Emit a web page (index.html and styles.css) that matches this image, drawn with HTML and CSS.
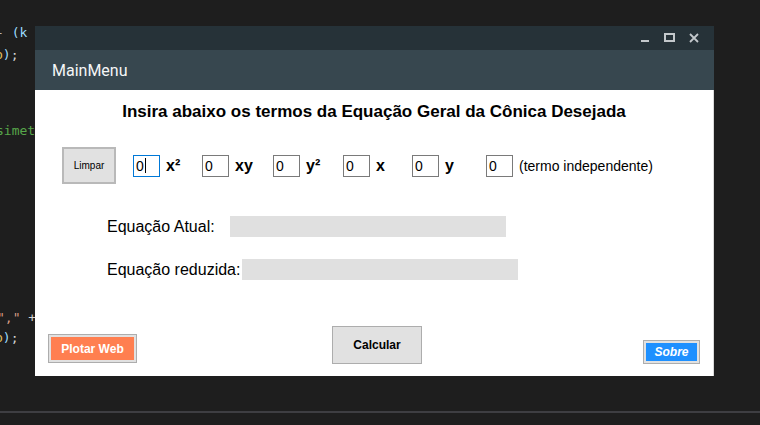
FILE: index.html
```html
<!DOCTYPE html>
<html lang="pt">
<head>
<meta charset="utf-8">
<title>MainMenu</title>
<link rel="stylesheet" href="styles.css">
</head>
<body>
  <div class="code">
    <div class="ln l1"><span class="c-gray">-</span> <span class="c-blue">(k</span></div>
    <div class="ln l2"><span class="c-gold">b</span><span class="c-blue">)</span>;</div>
    <div class="ln l3"><span class="c-green">simet</span></div>
    <div class="ln l4"><span class="c-str">","</span> +</div>
    <div class="ln l5"><span class="c-gold">b</span><span class="c-blue">)</span>;</div>
  </div>

  <div class="window">
    <div class="titlebar">
      <svg class="ctl" width="9" height="10" viewBox="0 0 9 10"><rect x="0" y="7" width="8" height="2" fill="#c3c8cb"/></svg>
      <svg class="ctl" width="11" height="10" viewBox="0 0 11 10"><rect x="1" y="1" width="9" height="7" fill="none" stroke="#c3c8cb" stroke-width="2"/></svg>
      <svg class="ctl" width="10" height="10" viewBox="0 0 10 10"><path d="M1 1 L9 9 M9 1 L1 9" stroke="#c3c8cb" stroke-width="1.8"/></svg>
    </div>
    <div class="header">MainMenu</div>
    <div class="content">
      <h1 class="heading">Insira abaixo os termos da Equação Geral da Cônica Desejada</h1>

      <div class="terms">
        <div class="btn limpar">Limpar</div>
        <div class="term-grid">
          <div class="term"><div class="box focused">0<span class="caret"></span></div><b>x²</b></div>
          <div class="term"><div class="box">0</div><b>xy</b></div>
          <div class="term"><div class="box">0</div><b>y²</b></div>
          <div class="term"><div class="box">0</div><b>x</b></div>
          <div class="term"><div class="box">0</div><b>y</b></div>
          <div class="term"><div class="box">0</div><span class="indep">(termo independente)</span></div>
        </div>
      </div>

      <div class="eq eq-atual">
        <span class="eq-label">Equação Atual:</span>
        <div class="eq-box"></div>
      </div>
      <div class="eq eq-red">
        <span class="eq-label">Equação reduzida:</span>
        <div class="eq-box"></div>
      </div>

      <div class="actions">
        <div class="btn-frame plotar"><span>Plotar Web</span></div>
        <div class="btn calcular">Calcular</div>
        <div class="btn-frame sobre"><span>Sobre</span></div>
      </div>
    </div>
  </div>

  <div class="bottom-line"></div>
</body>
</html>
```

FILE: styles.css
```css
* { box-sizing: border-box; }

html, body {
  margin: 0;
  padding: 0;
}

body {
  width: 760px;
  height: 425px;
  overflow: hidden;
  background: #1e1e1e;
  display: grid;
  grid-template-columns: 35px 679px 1fr;
  grid-template-rows: 26px 350px 35px 2px 12px;
  font-family: "Liberation Sans", Arial, sans-serif;
}

/* editor code peeking out on the left */
.code {
  grid-column: 1;
  grid-row: 1 / 4;
  overflow: hidden;
  font-family: "DejaVu Sans Mono", monospace;
  font-size: 13px;
  line-height: 20px;
  color: #d4d4d4;
}
.ln { white-space: pre; height: 20px; }
.l1 { margin-top: 23px; margin-left: -4px; }
.l2 { margin-top: 2px; margin-left: -5px; }
.l3 { margin-top: 56px; margin-left: -4px; }
.l4 { margin-top: 167px; margin-left: -3px; }
.l5 { margin-top: 0; margin-left: -5px; }
.c-gray { color: #b4b4b4; }
.c-blue { color: #9cdcfe; }
.c-gold { color: #e0c060; }
.c-green { color: #57a64a; }
.c-str { color: #d69d85; }

/* window */
.window {
  grid-column: 2;
  grid-row: 2;
  display: flex;
  flex-direction: column;
  background: #fff;
}

.titlebar {
  height: 24px;
  background: #263238;
  display: flex;
  justify-content: flex-end;
  align-items: center;
  padding-right: 15px;
  gap: 14px;
}
.ctl { display: block; }

.header {
  height: 40px;
  background: #37474f;
  color: #f4f6f7;
  font-family: Roboto, "Noto Sans", sans-serif;
  font-size: 16px;
  display: flex;
  align-items: center;
  padding-left: 17px;
}

.content {
  flex: 1;
  display: flex;
  flex-direction: column;
  background: #fff;
  border-right: 1px solid #d9d9d9;
  padding-top: 12px;
}

.heading {
  margin: 0;
  font-size: 17px;
  line-height: 20px;
  font-weight: bold;
  text-align: center;
  color: #000;
}

.terms {
  margin-top: 25px;
  height: 37px;
  display: flex;
  align-items: center;
  padding-left: 27px;
}

.btn {
  background: #e1e1e1;
  border: 1px solid #adadad;
  color: #000;
  display: flex;
  align-items: center;
  justify-content: center;
}

.limpar {
  width: 54px;
  height: 37px;
  border: 2px solid #b9b9b9;
  font-size: 10px;
  margin-right: 17px;
}

.term-grid {
  display: grid;
  grid-template-columns: 69px 71px 70px 69px 74px auto;
  align-items: center;
}

.term {
  display: flex;
  align-items: center;
  gap: 6px;
}
.term b {
  font-size: 16px;
  font-weight: bold;
}

.box {
  width: 27px;
  height: 22px;
  border: 1px solid #7a7a7a;
  font-size: 14px;
  line-height: 20px;
  padding-left: 2px;
  display: flex;
  align-items: center;
  color: #000;
}
.box.focused { border-color: #0078d7; }
.caret {
  display: inline-block;
  width: 1px;
  height: 15px;
  background: #000;
  margin-left: 1px;
}

.indep { font-size: 14px; }

.eq {
  display: flex;
  align-items: center;
  height: 21px;
  padding-left: 72px;
  font-size: 16px;
  color: #000;
}
.eq-atual { margin-top: 32px; }
.eq-red { margin-top: 22px; }
.eq-atual .eq-label { width: 123px; }
.eq-red .eq-label { width: 135px; }
.eq-box {
  width: 276px;
  height: 21px;
  background: #e0e0e0;
}

.actions {
  margin-top: auto;
  padding: 0 13px 12px 13px;
  display: flex;
  align-items: flex-end;
}

.btn-frame {
  border: 1px solid #adadad;
  background: #e1e1e1;
  padding: 2px;
  display: flex;
}
.btn-frame span {
  flex: 1;
  display: flex;
  align-items: center;
  justify-content: center;
  color: #fff;
  font-size: 12px;
}

.plotar {
  width: 89px;
  height: 29px;
  margin-bottom: 1px;
}
.plotar span {
  background: #ff7f50;
  font-weight: bold;
}

.calcular {
  width: 90px;
  height: 38px;
  margin-left: 195px;
  font-size: 12px;
  font-weight: bold;
}

.sobre {
  width: 57px;
  height: 24px;
  margin-left: auto;
}
.sobre span {
  background: #1e90ff;
  font-style: italic;
  font-weight: bold;
}

.bottom-line {
  grid-column: 1 / -1;
  grid-row: 4;
  background: #3e3e42;
}
```
